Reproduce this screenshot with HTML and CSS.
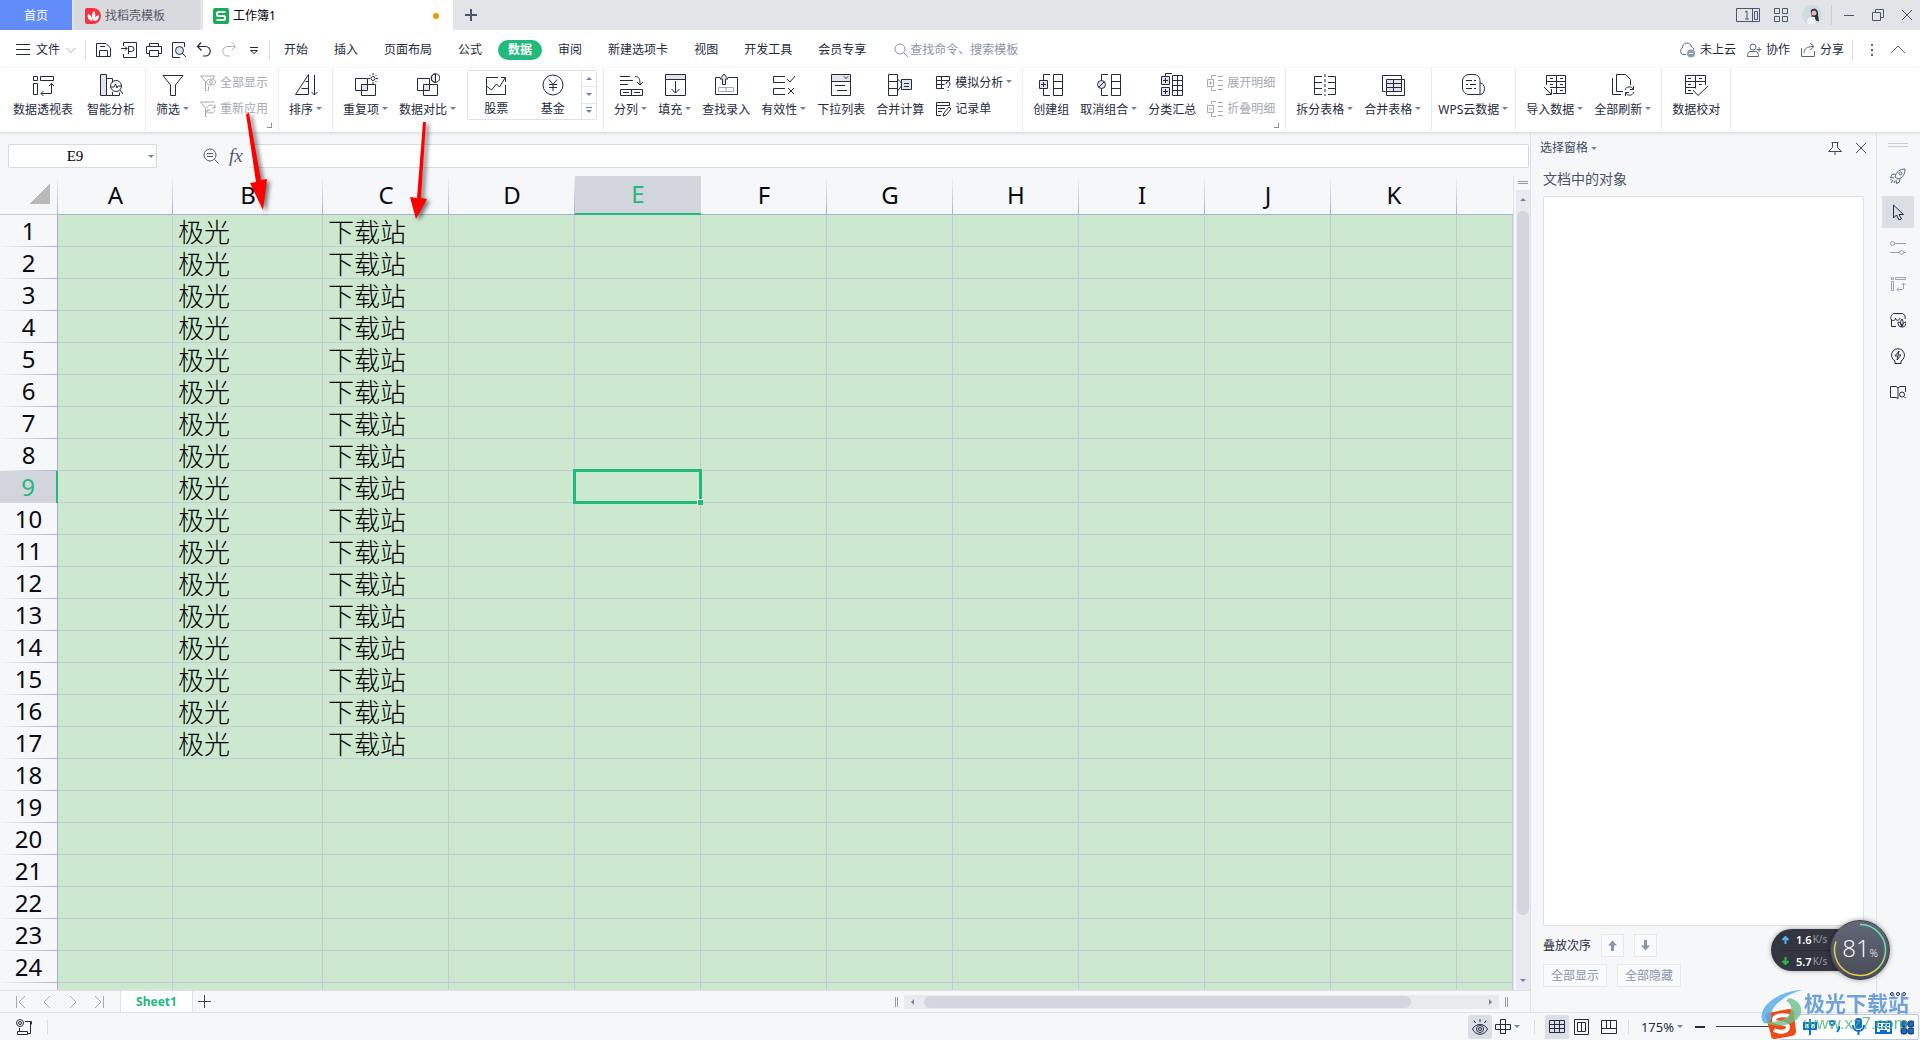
FILE: index.html
```html
<!DOCTYPE html>
<html lang="zh-CN">
<head>
<meta charset="utf-8">
<title>工作簿1</title>
<link rel="stylesheet" href="styles.css">
</head>
<body>
<header class="titlebar">
  <button class="tab tab-home">首页</button>
  <button class="tab tab-docer"><svg class="logo" width="16" height="16" viewBox="0 0 16 16"><path d="M2 0h6a8 8 0 0 1 0 16H2a2 2 0 0 1-2-2V2a2 2 0 0 1 2-2z" fill="#f5333f"/><path d="M7 13C3 12 2 9 3 6c3 1 4 3 4 7zM8 13c-2-4-1-8 1-10 2 3 2 7-1 10zM9 13c1-4 2-5 5-6 0 4-2 6-5 6z" fill="#fff"/></svg>找稻壳模板</button>
  <button class="tab tab-book"><svg class="logo" width="16" height="16" viewBox="0 0 16 16"><rect width="16" height="16" rx="2" fill="#1aad57"/><path d="M12.500 4H5.500a1.500 1.500 0 0 0-1.500 1.500v1A1.500 1.500 0 0 0 5.500 8h5a1.500 1.500 0 0 1 1.500 1.500v1a1.500 1.500 0 0 1-1.500 1.500h-7" fill="none" stroke="#fff" stroke-width="2"/></svg>工作簿1<span class="unsaved"></span></button>
  <button class="tab-add" aria-label="新建"><svg width="12" height="12" viewBox="0 0 12 12"><path d="M6 0v12M0 6h12" stroke-width="2"/></svg></button>
  <div class="window-tools">
    <button aria-label="窗口"><svg width="24" height="14" viewBox="0 0 24 14"><path d="M.5.500h23v13H.5zM16.500.500v13M9 4l2-1v8M9 11h4M18.500 3.500h3v8h-3z"/></svg></button>
    <button aria-label="应用"><svg width="14" height="14" viewBox="0 0 14 14"><path d="M.5.500h5v5h-5zM8.500.500h5v5h-5zM.5 8.500h5v5h-5zM8.500 8.500h5v5h-5z"/></svg></button>
    <button aria-label="账户"><svg class="logo" width="20" height="20" viewBox="0 0 20 20"><circle cx="10" cy="10" r="10" fill="#cfdde2"/><path d="M9 5c4-3 8 0 7 5l1 6c-3 1-4-2-4-4l-4 0c2-2-1-3 0-7z" fill="#30303a"/><circle cx="12" cy="8" r="2.500" fill="#e5b9ad"/><path d="M5 18c0-5 3-7 7-6l2 6c-3 2-6 2-9 0z" fill="#eef4f5"/></svg></button>
    <span class="vsep"></span>
    <button aria-label="最小化"><svg width="12" height="12" viewBox="0 0 12 12"><path d="M1 6.500h10"/></svg></button>
    <button aria-label="还原"><svg width="12" height="12" viewBox="0 0 12 12"><path d="M.5 3.500h8v8h-8zM3.500 3V.5h8v8H9"/></svg></button>
    <button aria-label="关闭"><svg width="12" height="12" viewBox="0 0 12 12"><path d="M1 1l10 10M11 1L1 11"/></svg></button>
  </div>
</header>

<nav class="menubar">
  <button class="file-menu"><svg width="14" height="14" viewBox="0 0 14 14"><path d="M0 1.500h14M0 6.500h14M0 11.500h14"/></svg>文件<svg class="soft" width="10" height="10" viewBox="0 0 10 10"><path d="M.5 3l4.500 4.500L9.500 3"/></svg></button>
  <span class="vsep"></span>
  <div class="quick">
    <button aria-label="保存"><svg width="16" height="16" viewBox="0 0 16 16"><path d="M.5 14.500V1.500h9.500l4.500 4.500v8.500zM3.500 14.500V8.500h8v6M4 4.500h5"/></svg></button>
    <button aria-label="输出"><svg width="16" height="16" viewBox="0 0 16 16"><path d="M2.500 4V.5h13v15h-13V12M0 6.500h6M4 4.500l2 2-2 2M7.500 12V4.500h3a2.500 2.500 0 0 1 0 5h-3"/></svg></button>
    <button aria-label="打印"><svg width="16" height="16" viewBox="0 0 16 16"><path d="M3.500 4.500v-3h9v3M3 11.500H.5v-7h15v7H13M3.500 8.500h9v6h-9z"/></svg></button>
    <button aria-label="打印预览"><svg width="16" height="16" viewBox="0 0 16 16"><path d="M13.500 5V.5h-12v15H9"/><circle cx="8.500" cy="8.500" r="4" fill="#dde1e8"/><path d="M11 11l4 4"/></svg></button>
    <button aria-label="撤销"><svg width="16" height="16" viewBox="0 0 16 16"><path d="M5 .5L1.500 4.500l4 4M2 4.500h7.500a4.500 4.500 0 0 1 0 9.500H7" stroke-width="1.200"/></svg></button>
    <button aria-label="恢复" disabled><svg width="16" height="16" viewBox="0 0 16 16"><path d="M11 .5l3.500 4-4 4M14 4.500H6.500a4.500 4.500 0 0 0 0 9.500H9"/></svg></button>
    <button aria-label="更多"><svg width="16" height="16" viewBox="0 0 16 16"><path d="M4 5.500h8M4.500 8.500l3.500 3 3.500-3z"/></svg></button>
  </div>
  <span class="vsep"></span>
  <div class="menus">
    <button>开始</button><button>插入</button><button>页面布局</button><button>公式</button><button class="active">数据</button><button>审阅</button><button>新建选项卡</button><button>视图</button><button>开发工具</button><button>会员专享</button>
  </div>
  <label class="search"><svg width="14" height="14" viewBox="0 0 14 14"><circle cx="6" cy="6" r="5"/><path d="M10 10l4 4"/></svg><input type="text" placeholder="查找命令、搜索模板" aria-label="查找命令"></label>
  <div class="share">
    <button><svg width="17" height="16" viewBox="0 0 17 16"><path d="M7 12.500H4a3.500 3.500 0 0 1-.5-6.500 4.500 4.500 0 0 1 9-1c1.500.5 2.500 1.500 2.500 3"/><circle cx="12" cy="11.500" r="4" fill="#8f9bb3" stroke="none"/><path d="M10 11.500h4" stroke="#fff"/></svg>未上云</button>
    <button><svg width="15" height="16" viewBox="0 0 15 16"><circle cx="6" cy="5" r="3"/><path d="M3 9.500C1 10 .5 12 .5 14.500h11c0-3-1-5-3-5zM12 5v5M9.500 7.500h5"/></svg>协作</button>
    <button><svg width="15" height="16" viewBox="0 0 15 16"><path d="M.5 6v8.500h13V9M3 11c0-4 3-6.500 9-6.500M9 1l4 3.500L9 8"/></svg>分享</button>
    <span class="vsep"></span>
    <button aria-label="更多"><svg width="16" height="16" viewBox="0 0 16 16"><path d="M8 2v2M8 7v2M8 12v2" stroke-width="2"/></svg></button>
    <button aria-label="收起"><svg width="16" height="16" viewBox="0 0 16 16"><path d="M1 11l7-7 7 7"/></svg></button>
  </div>
</nav>

<section class="ribbon">
  <div class="group first">
    <button class="big"><svg viewBox="0 0 24 24"><path d="M2.500 3.500h4v4h-4zM9.500 3.500h13v4h-13zM2.500 10.500h4v11h-4zM20.500 20V10.500M18 13l2.500-2.500L23 13M20.500 18v2.500H10M12.500 18L10 20.500l2.500 2.500"/></svg><span>数据透视表</span></button>
    <button class="big"><svg viewBox="0 0 24 24"><path d="M1.500 1.500h6v21h-6z" class="tint"/><path d="M7.500 5.500h6v4M7.500 22.500h13v-3M13.500 19v3"/><circle cx="17" cy="13" r="5.500"/><path d="M21 17l3 4M12 14h3l1.500-3 1.500 4 1-2h3"/></svg><span>智能分析</span></button>
  </div>
  <div class="group">
    <button class="big"><svg viewBox="0 0 24 24"><path d="M2 2.500h20L14.500 12v10.500h-5V12z"/></svg><span class="drop">筛选</span></button>
    <div class="stack">
      <button class="small" disabled><svg viewBox="0 0 16 16"><path d="M7 15.500H5.500V7L.5 1h14L13 4M8.500 11v4.500"/><circle cx="11" cy="7" r="1.500"/><path d="M6 7c2-4 8-4 10 0-2 4-8 4-10 0z"/></svg>全部显示</button>
      <button class="small" disabled><svg viewBox="0 0 16 16"><path d="M7 15.500H5.500V7L.5 1h14M7 7c1-4 7-4 8 0M15 3.500V7h-3M15 9c-1 4-7 4-8 0M7 12.500V9h3"/></svg>重新应用</button>
      <i class="corner"></i>
    </div>
  </div>
  <div class="group">
    <button class="big"><svg viewBox="0 0 24 24"><path d="M14.500 1.500v20H1.500zM11.500 8.500h3M7.500 15.500h7M20.500 2v20M17.500 19l3 3 3-3"/></svg><span class="drop">排序</span></button>
  </div>
  <div class="group">
    <button class="big"><svg viewBox="0 0 24 24"><path d="M8.500 17.500h-7v-12h12v6"/><path d="M7.500 11.500h6v6h-6z" class="tint"/><path d="M13.500 11.500h8v11h-14v-5"/><circle cx="19" cy="5.500" r="2"/><path d="M19 0v2M19 9v2M14 5.500h2M22 5.500h2M15.500 2l1 1M22.500 2l-1 1M22.500 9l-1-1"/></svg><span class="drop">重复项</span></button>
    <button class="big"><svg viewBox="0 0 24 24"><path d="M8.500 17.500h-7v-12h12v6"/><path d="M7.500 11.500h6v6h-6z" class="tint"/><path d="M13.500 11.500h8v11h-14v-5"/><path d="M19.500 1a4 4 0 0 0 0 8.500z" class="tint"/><circle cx="19.500" cy="5" r="4.300"/></svg><span class="drop">数据对比</span></button>
    <div class="gallery">
      <button class="big"><svg viewBox="0 0 24 24"><path d="M14 4.500H2.500v17h19V12M2.500 13l5 4 5-6 3 3L21 5M17 4.500h4.500V9"/></svg><span>股票</span></button>
      <button class="big"><svg viewBox="0 0 24 24"><circle cx="12" cy="12" r="10"/><path d="M8 6.500l4 5 4-5M12 11v7M8 11.500h8M8 14.500h8"/></svg><span>基金</span></button>
      <div class="spin"><button aria-label="上"><i class="up"></i></button><button aria-label="下"><i class="dn"></i></button><button aria-label="展开"><i class="dn bar"></i></button></div>
    </div>
  </div>
  <div class="group">
    <button class="big"><svg viewBox="0 0 24 24"><path d="M1 3.500h10M1 7.500h13M1 11.500h8M16 3.500c4 0 5 2 5 8M18 9l3 3 3-3M1.500 16.500h22v6h-22zM12.500 16.500v6M4 19.500h6M15 19.500h6"/></svg><span class="drop">分列</span></button>
    <button class="big"><svg viewBox="0 0 24 24"><path d="M2.500 1.500h20v5h-20z" class="tint"/><path d="M2.500 6.500h20v16h-20zM12.500 8v12M8.500 16l4 4 4-4"/></svg><span class="drop">填充</span></button>
    <button class="big"><svg viewBox="0 0 24 24"><path d="M6 4.500H1.500v17h22v-17H14"/><path d="M8.500 11.500V6H6l4-5 4 5h-2.500v5.500z" class="tint"/><path d="M4.500 14.500h15v4h-15zM12 14.500v4" class="soft"/></svg><span>查找录入</span></button>
    <button class="big"><svg viewBox="0 0 24 24"><path d="M13 3.500H1.500v6H13M13 15.500H1.500v6H13M15 6l3 3 5-6M16 15l6 6M22 15l-6 6"/></svg><span class="drop">有效性</span></button>
    <button class="big"><svg viewBox="0 0 24 24"><path d="M2.500 1.500h19v7h-19z" class="tint"/><path d="M2.500 8.500h19v14h-19zM15 3.500l2 2 2-2M6 12.500h10M8 17.500h10"/></svg><span>下拉列表</span></button>
    <button class="big"><svg viewBox="0 0 24 24"><path d="M.5 1.500h9v21h-9zM.5 8.500h9M.5 15.500h9M9.500 6l4 4M9.500 18l4-5"/><path d="M13.500 6.500h10v10h-10z" class="tint"/><path d="M16 10.500h5M16 13.500h5"/></svg><span>合并计算</span></button>
    <div class="stack">
      <button class="small"><svg viewBox="0 0 16 16"><path d="M9 13.500H1.500v-12h13V6M1.500 5.500h13M1.500 9.500h8M6.500 1.500v12M11 9c0-3 4-3 4 0 0 2-2 2-2 4M13 15v1"/></svg><span class="drop">模拟分析</span></button>
      <button class="small"><svg viewBox="0 0 16 16"><path d="M6 14.500H1.500v-13h13V5M1.500 4.500h13M3 7.500h7M3 10.500h4M8 15l1-3 5-6 2 2-5 6z"/></svg>记录单</button>
    </div>
  </div>
  <div class="group">
    <button class="big"><svg viewBox="0 0 24 24"><path d="M11 1.500H4.500v21H11M14.500 1.500h9v21h-9zM14.500 8.500h9M14.500 15.500h9"/><path d="M.5 7.500h8v8h-8z" class="tint"/><path d="M2 11.500h5M4.500 9v5"/></svg><span>创建组</span></button>
    <button class="big"><svg viewBox="0 0 24 24"><path d="M11 1.500H4.500v21H11M14.500 1.500h9v21h-9zM14.500 8.500h9M14.500 15.500h9"/><circle cx="4.500" cy="11.500" r="4" class="tint"/><path d="M2 14l5-5"/></svg><span class="drop">取消组合</span></button>
    <button class="big"><svg viewBox="0 0 24 24"><path d="M5.500 3V.5H12M12.500 2.500h10v20h-10zM12.500 7.500h10M12.500 12.500h10M12.500 17.500h10M17.500 2.500v20"/><path d="M1.500 3.500h8v8h-8zM1.500 14.500h8v8h-8z" class="tint"/><path d="M3 7.500h5M5.500 5v5M3 18.500h5M5.500 16v5"/></svg><span>分类汇总</span></button>
    <div class="stack">
      <button class="small" disabled><svg viewBox="0 0 16 16"><path d="M9 .5H4.500v3M4.500 12v3.500H9M.5 4.500h6v7h-6zM2 8h3M3.500 6.500v3M11 1.500h5M11 5.500h5M11 10.500h5M11 14.500h5"/></svg>展开明细</button>
      <button class="small" disabled><svg viewBox="0 0 16 16"><path d="M9 .5H4.500v3M4.500 12v3.500H9M.5 4.500h6v7h-6zM2 8h3M11 1.500h5M11 5.500h5M11 10.500h5M11 14.500h5"/></svg>折叠明细</button>
      <i class="corner"></i>
    </div>
  </div>
  <div class="group">
    <button class="big"><svg viewBox="0 0 24 24"><path d="M9 3.500H1.500v18H9M1.500 9.500H9M1.500 15.500H9M15 3.500h7.500v18H15M22.500 9.500H15M22.500 15.500H15"/><path d="M12 1v22" stroke-dasharray="3 2"/></svg><span class="drop">拆分表格</span></button>
    <button class="big"><svg viewBox="0 0 24 24"><path d="M4.500 18.500h-3v-16h19v4"/><path d="M5.500 6.500h15v12h-15z" class="tint"/><path d="M20.500 6.500h3v16h-18v-4M5.500 10.500h15M5.500 14.500h15M12.500 6.500v12"/></svg><span class="drop">合并表格</span></button>
  </div>
  <div class="group snug">
    <button class="big"><svg viewBox="0 0 24 24"><path d="M8 1.500h5a6 6 0 0 1 6 6v14H8a6.500 6.500 0 0 1-6.500-6.500V8A6.500 6.500 0 0 1 8 1.500zM19 10c6 0 6 11.500 0 11.500M5 7.500h6M13 7.500h2M5 11.500h2M9 11.500h6M5 15.500h6M13 15.500h2"/></svg><span class="drop">WPS云数据</span></button>
  </div>
  <div class="group">
    <button class="big"><svg viewBox="0 0 24 24"><path d="M3.500 12V2.500h19v18H10M3.500 8.500h19M7 14.500h15.500M13.500 2.500v18M7 5.500h3M7 11.500h3M17 5.500h3M17 11.500h3M17 17.500h3M1 14l7 7M8.500 16v5.500H3"/></svg><span class="drop">导入数据</span></button>
    <button class="big"><svg viewBox="0 0 24 24"><path d="M1.500 5v16.500H10M12 18.500H5.500v-17h9l5 5V12M14 17c1-4 7-4 8-1M22.500 13v3.500H19M23 19c-1 4-7 4-8 1M14.500 23v-3.500H18"/></svg><span class="drop">全部刷新</span></button>
  </div>
  <div class="group">
    <button class="big"><svg viewBox="0 0 24 24"><path d="M9 20.500H1.500v-18h20V12M1.500 8.500h20M1.500 14.500H12M11.500 2.500v13M4 5.500h3M4 11.500h3M4 17.500h3M15 5.500h3M15 11.500h3M9 17l5 5.500L24 13"/></svg><span>数据校对</span></button>
  </div>
</section>

<main class="main">
  <section class="workspace">
    <div class="formula">
      <div class="namebox"><input type="text" value="E9" aria-label="名称框"><i class="dn"></i></div>
      <button aria-label="浏览公式"><svg width="16" height="16" viewBox="0 0 16 16"><circle cx="7" cy="7" r="6"/><path d="M11.500 11.500l4 4M4 5.500h6M4 8.500h6"/></svg></button>
      <button class="fx">fx</button>
      <input class="formula-input" type="text" aria-label="编辑栏">
    </div>
    <div class="sheet">
      <div class="grid">
        <table>
          <colgroup><col class="c-head"><col class="c-a"><col class="c-b"><col class="c"><col class="c"><col class="c"><col class="c"><col class="c"><col class="c"><col class="c"><col class="c"><col class="c"><col></colgroup>
          <thead><tr><th class="all"><i></i></th><th>A</th><th>B</th><th>C</th><th>D</th><th class="on">E</th><th>F</th><th>G</th><th>H</th><th>I</th><th>J</th><th>K</th><th></th></tr></thead>
          <tbody>
          <tr><th>1<td><td>极光<td>下载站<td><td><td><td><td><td><td><td><td>
          <tr><th>2<td><td>极光<td>下载站<td><td><td><td><td><td><td><td><td>
          <tr><th>3<td><td>极光<td>下载站<td><td><td><td><td><td><td><td><td>
          <tr><th>4<td><td>极光<td>下载站<td><td><td><td><td><td><td><td><td>
          <tr><th>5<td><td>极光<td>下载站<td><td><td><td><td><td><td><td><td>
          <tr><th>6<td><td>极光<td>下载站<td><td><td><td><td><td><td><td><td>
          <tr><th>7<td><td>极光<td>下载站<td><td><td><td><td><td><td><td><td>
          <tr><th>8<td><td>极光<td>下载站<td><td><td><td><td><td><td><td><td>
          <tr><th class="on">9<td><td>极光<td>下载站<td><td class="selected"><i></i><td><td><td><td><td><td><td>
          <tr><th>10<td><td>极光<td>下载站<td><td><td><td><td><td><td><td><td>
          <tr><th>11<td><td>极光<td>下载站<td><td><td><td><td><td><td><td><td>
          <tr><th>12<td><td>极光<td>下载站<td><td><td><td><td><td><td><td><td>
          <tr><th>13<td><td>极光<td>下载站<td><td><td><td><td><td><td><td><td>
          <tr><th>14<td><td>极光<td>下载站<td><td><td><td><td><td><td><td><td>
          <tr><th>15<td><td>极光<td>下载站<td><td><td><td><td><td><td><td><td>
          <tr><th>16<td><td>极光<td>下载站<td><td><td><td><td><td><td><td><td>
          <tr><th>17<td><td>极光<td>下载站<td><td><td><td><td><td><td><td><td>
          <tr><th>18<td><td><td><td><td><td><td><td><td><td><td><td>
          <tr><th>19<td><td><td><td><td><td><td><td><td><td><td><td>
          <tr><th>20<td><td><td><td><td><td><td><td><td><td><td><td>
          <tr><th>21<td><td><td><td><td><td><td><td><td><td><td><td>
          <tr><th>22<td><td><td><td><td><td><td><td><td><td><td><td>
          <tr><th>23<td><td><td><td><td><td><td><td><td><td><td><td>
          <tr><th>24<td><td><td><td><td><td><td><td><td><td><td><td>
          <tr><th><td><td><td><td><td><td><td><td><td><td><td><td>
          </tbody>
        </table>
      </div>
      <div class="vscroll"><span class="split"></span><div class="vtrack"><i class="up"></i><span class="vthumb"></span><i class="dn"></i></div></div>
    </div>
    <div class="sheetbar">
      <div class="sheetnav">
        <button aria-label="第一张"><svg width="10" height="12" viewBox="0 0 10 12"><path d="M.5 0v12M9 0L3 6l6 6"/></svg></button>
        <button aria-label="上一张"><svg width="10" height="12" viewBox="0 0 10 12"><path d="M8 0L2 6l6 6"/></svg></button>
        <button aria-label="下一张"><svg width="10" height="12" viewBox="0 0 10 12"><path d="M2 0l6 6-6 6"/></svg></button>
        <button aria-label="最后一张"><svg width="10" height="12" viewBox="0 0 10 12"><path d="M9.500 0v12M1 0l6 6-6 6"/></svg></button>
      </div>
      <button class="sheet-tab">Sheet1</button>
      <button class="sheet-add" aria-label="新建工作表"><svg width="13" height="13" viewBox="0 0 13 13"><path d="M6.500 0v13M0 6.500h13"/></svg></button>
      <div class="hscroll"><span class="grip"></span><div class="htrack"><i class="lf"></i><span class="hthumb"></span><i class="rt"></i></div><span class="grip"></span></div>
    </div>
  </section>

  <aside class="pane">
    <div class="pane-head"><button class="drop">选择窗格</button>
      <button class="pin" aria-label="固定"><svg width="14" height="14" viewBox="0 0 14 14"><path d="M3.500 1.500h7M4.500 1.500v5L.5 10.500h13l-4-4v-5M7 10.500V14"/></svg></button>
      <button aria-label="关闭"><svg width="12" height="12" viewBox="0 0 12 12"><path d="M1 1l10 10M11 1L1 11"/></svg></button></div>
    <h2>文档中的对象</h2>
    <div class="objects"></div>
    <div class="order"><span>叠放次序</span>
      <button aria-label="上移"><svg width="9" height="11" viewBox="0 0 9 11"><path d="M4.500 11V4" stroke-width="3"/><path d="M0 5.500L4.500.500 9 5.500z" fill="#8a94ab" stroke="none"/></svg></button>
      <button aria-label="下移"><svg width="9" height="11" viewBox="0 0 9 11"><path d="M4.500 0v7" stroke-width="3"/><path d="M0 5.500l4.500 5L9 5.500z" fill="#8a94ab" stroke="none"/></svg></button></div>
    <div class="showhide"><button>全部显示</button><button>全部隐藏</button></div>
  </aside>

  <nav class="rail">
    <span class="rail-grip"></span>
    <button aria-label="火箭"><svg class="mid" viewBox="0 0 16 16"><path d="M5 9c1-5 5-8 10-8 0 5-2 9-7 10zM5.500 6L2 6.500.500 9.500 4 10M10 10.500l-.5 3.500-3 1.500L6 12M3 12l-2 3M5 13l-1 2M1.500 11l-1 1"/><circle cx="10.500" cy="5.500" r="1.500"/></svg></button>
    <button class="on" aria-label="选择"><svg viewBox="0 0 16 16"><path d="M3.500 1v13l3-3 2.500 5 2.500-1L9 10.500h4.500z"/></svg></button>
    <button aria-label="设置"><svg class="dim" viewBox="0 0 16 16"><circle cx="2.500" cy="3.500" r="2"/><circle cx="11.500" cy="12.500" r="2"/><path d="M4.500 3.500H16M0 12.500h9.500M13.500 12.500H16"/></svg></button>
    <button aria-label="透视表"><svg class="dim" viewBox="0 0 16 16"><path d="M1.500 1.500h2v2h-2zM5.500 1.500h10v2h-10zM1.500 5.500h2v9h-2zM13.500 13V7M11.500 9l2-2 2 2M13 13.500H7M9 11.500l-2 2 2 2"/></svg></button>
    <button aria-label="模板"><svg viewBox="0 0 16 16"><path d="M1.500 8v6.500H6M1 7.500C0 5 2 1.500 4 1.500h8c2 0 4 3 3 5.500M1 7c1 2 4 2 4.500 0M5.500 6c0 3 4 3 4.500 0"/><path d="M12 7c2 3 1 5 0 8-2-3-2-5 0-8zM8 10c2 0 4 2 4 5-3 0-4-2-4-5zM16 10c-2 0-4 2-4 5 3 0 4-2 4-5z"/></svg></button>
    <button aria-label="助手"><svg viewBox="0 0 16 16"><path d="M5 13a6.500 6.500 0 1 1 6 0v2.500H5zM9 3L5 8h3l-1 4 4-5H8z"/></svg></button>
    <button aria-label="帮助"><svg viewBox="0 0 16 16"><path d="M15.500 8V2.500H10L8 4 6 2.500H.5v11H6l2 1M8 4v10.500"/><circle cx="12" cy="10.500" r="2.500"/><path d="M14 12.500l2 2"/></svg></button>
    <button class="more" aria-label="更多"><svg viewBox="0 0 16 16"><circle cx="2" cy="8" r="1.500"/><circle cx="8" cy="8" r="1.500"/><circle cx="14" cy="8" r="1.500"/></svg></button>
  </nav>
</main>

<footer class="status">
  <button class="macro" aria-label="录制宏"><svg width="16" height="16" viewBox="0 0 16 16"><circle cx="4" cy="4" r="3.500"/><circle cx="4" cy="4" r="1.500"/><path d="M9 2.500h5.500v11M14.500 2.500h1v3M1.500 12.500h10v3h-10zM3.500 9v3.500M12 14.500h2.500v-2"/></svg></button>
  <span class="vsep"></span>
  <div class="views">
    <button class="on" aria-label="护眼模式"><svg width="16" height="16" viewBox="0 0 16 16"><path d="M.5 10c3-6 12-6 15 0-3 7-12 7-15 0zM8 0v3M2 1.500L3.500 4M14 1.500L12.500 4"/><circle cx="8" cy="10" r="3.500"/><circle cx="8" cy="10" r="1.500"/></svg></button>
    <button class="drop cross" aria-label="阅读模式"><svg width="16" height="16" viewBox="0 0 16 16"><path d="M5.500.500h5v14h-5zM.5 5.500h15v5H.5z"/></svg></button>
    <span class="vsep"></span>
    <button class="on" aria-label="普通视图"><svg width="16" height="14" viewBox="0 0 16 14"><path d="M.5.500h15v12H.5zM.5 4.500h15M.5 8.500h15M5.500.500v12M10.500.500v12"/></svg></button>
    <button aria-label="分页预览"><svg width="16" height="16" viewBox="0 0 16 16"><path d="M.5.500h14v15H.5zM3.500 3.500h8v9h-8zM7.500 3.500v9"/></svg></button>
    <button aria-label="页面布局"><svg width="16" height="14" viewBox="0 0 16 14"><path d="M.5.500h15v13H.5zM.5 8.500h9v-8M5.500.500v8M9.500 8.500h6"/></svg></button>
    <span class="vsep"></span>
    <button class="drop zoom">175%</button>
    <button class="minus" aria-label="缩小"><svg width="10" height="10" viewBox="0 0 10 10"><path d="M0 5h10" stroke-width="2"/></svg></button>
    <input type="range" class="slider" min="10" max="400" value="400" aria-label="缩放">
  </div>
</footer>

<svg class="pointers" width="480" height="240" viewBox="0 0 480 240">
  <g fill="#f00"><path d="M246 114l3-1 12 67 6-1-4 31-13-27 6-1z"/><path d="M423 122h3l-5 76 6 1-11 20-6-22 7 1z"/></g>
</svg>

<div class="netmeter">
  <div class="speeds"><div><svg width="7" height="8" viewBox="0 0 7 8"><path d="M3.500 8V1M.5 4l3-3 3 3" stroke="#4db8f5" stroke-width="2"/></svg><b>1.6</b>K/s</div><div><svg width="7" height="8" viewBox="0 0 7 8"><path d="M3.500 0v7M.5 4l3 3 3-3" stroke="#2eb84a" stroke-width="2"/></svg><b>5.7</b>K/s</div></div>
  <div class="gauge"><svg width="60" height="60" viewBox="0 0 60 60"><defs><linearGradient id="arc" x1="0" y1="1" x2="1" y2="0"><stop offset="0" stop-color="#f5b542"/><stop offset=".4" stop-color="#d8dc50"/><stop offset="1" stop-color="#3fe0e0"/></linearGradient></defs><path d="M30 4.500a25.500 25.500 0 1 1-24 17" stroke="url(#arc)" stroke-width="1.500"/></svg><span>81<small>%</small></span></div>
</div>

<div class="ime">
  <div class="ime-bar"><svg width="112" height="20" viewBox="0 0 112 20"><g stroke="#0a6ed8" stroke-width="2"><path d="M2 6h12v6H2zM8 2v16"/><circle cx="30" cy="6" r="2"/><path d="M37 9v3l-2 3"/><rect x="54" y="2" width="5" height="9" rx="2" fill="#0a6ed8"/><path d="M51 8c0 8 11 8 11 0M56.500 14v4M74 5h15v11H74zM77 8h2M81 8h2M85 8h2M77 11h2M81 11h2M85 11h2M78 14h7"/></g><g fill="#0a6ed8"><rect x="99" y="4" width="6" height="6" rx="2"/><rect x="106" y="4" width="6" height="6" rx="2"/><rect x="99" y="11" width="6" height="6" rx="2"/><rect x="106" y="11" width="6" height="6" rx="2"/></g></svg></div>
  <svg class="badge" width="42" height="50" viewBox="0 0 42 50"><path d="M7 23l21-4c3 0 4 1 5 4l2 18c0 3-1 4-4 5l-17 3c-3 0-4-1-4-4L5 27c0-2 0-3 2-4z" fill="#f04a14"/><path d="M28 26c-8-2-15 0-15 4s14 2 14 7-8 6-14 3" stroke="#fff" stroke-width="4"/><path d="M41 0C22 0-3 14 1 30c2 6 8 3 10-2C7 20 20 6 41 0z" fill="#59aee6" opacity=".85"/><path d="M28 8c14 3 16 16 6 23C25 37 12 37 3 32c13 1 26-3 27-12 1-4-1-7-5-9z" fill="#6cc08a" opacity=".8"/></svg>
  <div class="mark"><strong>极光下载站</strong><span>www.xz7.com</span></div>
</div>
</body>
</html>
```
FILE: styles.css
```css
* { box-sizing: border-box; }
body {
  margin: 0;
  height: 100vh;
  display: flex;
  flex-direction: column;
  overflow: hidden;
  position: relative;
  background: #f6f7f9;
  color: #252b3e;
  font: 12px/18px "Noto Sans", "Noto Sans CJK SC", sans-serif;
}
button, input { font: inherit; color: inherit; background: none; border: 0; padding: 0; margin: 0; }
button { display: flex; align-items: center; white-space: nowrap; }
svg { fill: none; stroke: currentColor; flex: none; display: block; }
.logo, .pointers { stroke: none; }
.tint { fill: #e1e4ea; }
.soft { stroke: #a2a8b5; }
.vsep { width: 1px; height: 20px; background: #d9dce3; flex: none; }

/* small triangles */
.dn, .up, .lf, .rt { width: 0; height: 0; display: block; border: 3px solid transparent; flex: none; }
.dn { border-top-color: #7684a3; border-bottom: 0; }
.up { border-bottom-color: #7684a3; border-top: 0; }
.lf { border-right-color: #7684a3; border-left: 0; }
.rt { border-left-color: #7684a3; border-right: 0; }
.drop::after { content: ""; display: inline-block; margin-left: 3px; border: 3px solid transparent; border-top-color: #7684a3; border-bottom: 0; vertical-align: 4px; }

.titlebar { height: 30px; display: flex; background: #e2e4e8; flex: none; }
.tab { height: 30px; gap: 4px; padding-top: 2px; }
.tab-home { width: 72px; background: #638cfb; color: #fff; justify-content: center; }
.tab-docer { width: 126px; margin-left: 2px; padding-left: 11px; background: #d9dadd; color: #555b68; }
.tab-book { width: 250px; margin-left: 3px; padding: 2px 14px 0 10px; background: #fff; color: #000; }
.unsaved { width: 6px; height: 6px; border-radius: 50%; background: #e69b00; margin-left: auto; }
.tab-add { margin-left: 12px; color: #4a5570; }
.window-tools { margin-left: auto; display: flex; align-items: center; gap: 13px; padding-right: 7px; color: #4a5673; }
.window-tools .vsep { background: #c9ccd4; margin-left: -4px; margin-right: -2px; }
.window-tools button + button { margin-left: 1px; }
.window-tools .vsep ~ button + button { margin-left: 4px; }

.menubar { height: 38px; display: flex; align-items: center; background: #fff; flex: none; padding: 1px 0 0 16px; }
.file-menu { gap: 6px; margin-right: 9px; }
.quick { display: flex; gap: 9px; margin: 0 7px 0 10px; }
.quick button:disabled { color: #a9aeba; }
.menus { display: flex; gap: 6px; margin-left: 4px; }
.menus button { height: 20px; padding: 0 10px; border-radius: 10px; }
.menus .active { background: #21ba7c; color: #fff; font-weight: 700; }
.search { display: flex; align-items: center; gap: 2px; margin-left: 18px; color: #8a94ab; }
.search input { width: 150px; }
.search input::placeholder { color: #8a94ab; opacity: 1; }
.share { margin-left: auto; display: flex; align-items: center; gap: 11px; padding-right: 14px; }
.share button { gap: 4px; }
.share svg { color: #5a647c; }
.share .vsep { margin-left: -3px; }
.share .vsep + button { margin-right: -1px; }

.ribbon { display: flex; background: #fff; flex: none; box-shadow: 0 1px 3px #d5d7dc; position: relative; padding-bottom: 2px; }
.group { display: flex; align-items: flex-start; gap: 11px; padding: 5px 10px 0; border-right: 1px solid #e9ebef; height: 62px; flex: none; }
.group.first { padding-left: 13px; gap: 14px; }
.group.snug { padding-left: 6px; padding-right: 7px; }
.big { flex-direction: column; gap: 4px; }
.big svg { width: 24px; height: 24px; }
.stack { display: flex; flex-direction: column; gap: 8px; position: relative; padding-top: 1px; }
.small { gap: 4px; height: 18px; }
.small svg { width: 16px; height: 16px; }
.small:disabled { color: #a6a9b0; }
.corner { position: absolute; right: -4px; top: 50px; width: 5px; height: 5px; border: solid #8690a8; border-width: 0 1px 1px 0; }
.gallery { display: flex; width: 130px; height: 50px; margin-top: -3px; margin-right: -4px; border: 1px solid #dfe1e6; border-radius: 2px; }
.gallery .big { flex: 1; padding-top: 2px; gap: 3px; }
.spin { width: 15px; display: flex; flex-direction: column; border-left: 1px solid #e4e6ea; }
.spin button { flex: 1; justify-content: center; border-top: 1px solid #e4e6ea; }
.spin button:first-child { border-top: 0; }
.spin .bar { position: relative; }
.spin .bar::before { content: ""; position: absolute; left: -3px; top: -6px; width: 6px; height: 1px; background: #7684a3; }

.main { flex: 1; min-height: 0; display: flex; }
.workspace { flex: 1; min-width: 0; display: flex; flex-direction: column; }
.formula { display: flex; align-items: center; height: 44px; padding: 4px 1px 0 8px; flex: none; color: #4f5a72; }
.namebox { display: flex; align-items: center; width: 149px; height: 24px; padding-right: 2px; margin-right: 46px; background: #fff; border: 1px solid #d6d9e0; border-radius: 2px; }
.namebox input { flex: 1; min-width: 0; text-align: center; padding-right: 7px; font: 15px/20px "Liberation Serif", serif; color: #000; }
.fx { margin: 0 6px 0 10px; font: italic 19px/20px "Liberation Serif", serif; }
.formula-input { flex: 1; min-width: 0; height: 24px; background: #fff; border: 1px solid #d6d9e0; border-left: 0; border-radius: 2px; }
.sheet { flex: 1; min-height: 0; display: flex; }
.grid { flex: 1; min-width: 0; overflow: hidden; border-right: 1px solid #e0e2e8; margin-right: 2px; }
table { width: 100%; table-layout: fixed; border-collapse: separate; border-spacing: 0; }
.c-head { width: 58px; }
.c-a { width: 115px; }
.c-b { width: 150px; }
.c { width: 126px; }
th { font: 24px/29px "Noto Sans", sans-serif; color: #0a0a12; padding: 0 0 2px; }
td { height: 32px; padding: 0 0 0 5px; border: solid #c3c8da; border-width: 0 1px 1px 0; background: #cce8cf; font: 300 26px/30px "Noto Sans CJK SC", sans-serif; color: #000; white-space: nowrap; }
thead th { height: 39px; border-bottom: 1px solid #a9b0cb; background: linear-gradient(#f6f7f9, #a9b0cb) right / 1px 100% no-repeat; }
thead th:last-child { background: none; }
thead .all { border-bottom-color: #c6cbdc; }
.all i { display: block; margin: 0 8px 0 auto; width: 20px; height: 20px; background: linear-gradient(135deg, transparent 50%, #b9b9b9 50%); }
thead .on { background: #d2d5dc; color: #21ba7c; border-bottom: 2px solid #21ba7c; }
tbody th { background: linear-gradient(90deg, #f6f7f9, #a9b0cb) bottom / 100% 1px no-repeat; border-right: 1px solid #a9b0cb; }
tbody .on { background: #d2d5dc; color: #21ba7c; border-right: 2px solid #21ba7c; }
.selected { position: relative; }
.selected::before { content: ""; position: absolute; inset: -2px; border: 3px solid #21ba7c; }
.selected i { position: absolute; right: -3px; bottom: -3px; width: 6px; height: 6px; background: #21ba7c; border: solid #fff; border-width: 1px 0 0 1px; z-index: 1; }
.vscroll { width: 14px; display: flex; flex-direction: column; }
.split { margin: 5px 2px 6px; height: 3px; border: solid #8f9bb3; border-width: 1px 0; }
.vtrack { flex: 1; display: flex; flex-direction: column; align-items: center; background: #e9eaf0; padding: 8px 0; gap: 10px; }
.vthumb { flex: 1; width: 12px; border-radius: 6px; background: #d3d6de; margin-bottom: 54px; }
.sheetbar { height: 22px; display: flex; align-items: center; border-top: 1px solid #dfe1e8; flex: none; }
.sheetnav { display: flex; gap: 16px; padding: 0 16px 0 16px; color: #a3a8b4; }
.sheet-tab { height: 21px; width: 73px; justify-content: center; background: #fff; color: #21ba7c; font-weight: 700; border: solid #dfe1e8; border-width: 0 1px; }
.sheet-add { margin-left: 5px; color: #3a4560; }
.hscroll { margin-left: auto; width: 41.5%; display: flex; align-items: center; gap: 6px; padding-right: 22px; }
.grip { width: 3px; height: 10px; border: solid #8f9bb3; border-width: 0 1px; }
.htrack { flex: 1; height: 14px; display: flex; align-items: center; gap: 10px; padding: 0 7px; background: #e9eaf0; }
.hthumb { flex: 1; height: 12px; border-radius: 6px; background: #d3d6de; margin-right: 68px; }

.pane { width: 346px; border-left: 1px solid #dfe1e8; padding: 7px 12px 25px 12px; display: flex; flex-direction: column; flex: none; color: #4a5366; }
.pane-head { display: flex; align-items: center; height: 18px; margin: 0 -3px; gap: 13px; color: #3f4a63; }
.pane-head .pin { margin-left: auto; }
h2 { margin: 11px 0 8px; font: 14px/20px "Noto Sans CJK SC", sans-serif; }
.objects { flex: 1; background: #fff; border: 1px solid #dfe1e8; border-radius: 2px; }
.order { display: flex; align-items: center; gap: 10px; margin: 8px 0 7px; color: #252b3e; }
.order button, .showhide button { height: 23px; border: 1px solid #e6e8ec; color: #8a94ab; background: #f9fafb; justify-content: center; }
.order button { width: 23px; }
.showhide { display: flex; gap: 10px; }
.showhide button { width: 64px; }

.rail { width: 44px; border-left: 1px solid #dfe1e8; padding: 11px 0 9px 5px; display: flex; flex-direction: column; gap: 4px; flex: none; }
.rail-grip { width: 20px; height: 4px; margin: 0 0 9px 6px; border: solid #c9ccd4; border-width: 1px 0; }
.rail button { width: 32px; height: 32px; border-radius: 2px; justify-content: center; }
.rail svg { width: 16px; height: 16px; }
.rail .on, .views .on { background: #dadfe6; }
.rail .mid { color: #53617f; }
.rail .dim { color: #9aa3b5; }
.rail .more { height: 18px; margin-top: auto; }

.status { height: 28px; display: flex; align-items: center; border-top: 1px solid #dfe1e8; flex: none; }
.macro { margin: 0 15px 0 16px; }
.status .vsep { height: 14px; }
.views { margin-left: auto; display: flex; align-items: center; padding-right: 51px; }
.views .on { width: 24px; height: 24px; justify-content: center; border-radius: 2px; margin-right: 3px; }
.views .cross { margin-right: 14px; }
.views .vsep + .on { margin: 0 5px 0 10px; }
.views button + button:not(.cross) { margin-right: 11px; }
.views .zoom { font-size: 13px; margin: 0 12px 0 12px; }
.slider { width: 153px; height: 1px; background: #333d55; appearance: none; }
.slider::-webkit-slider-thumb { appearance: none; width: 6px; height: 12px; background: #333d55; }

/* overlays floating above the window */
.pointers { position: absolute; left: 0; top: 0; pointer-events: none; filter: drop-shadow(3px 2px 2px #0008); }
.netmeter { position: absolute; right: 30px; bottom: 60px; display: flex; align-items: center; }
.speeds { width: 91px; height: 42px; margin-right: -32px; padding-left: 11px; border-radius: 21px 0 0 21px; background: #333640; color: #989ba3; font-size: 10px; line-height: 21px; box-shadow: 0 0 5px #0005; }
.speeds div { display: flex; align-items: center; gap: 1px; height: 21px; }
.speeds div + div { border-top: 1px solid #2a2c34; }
.speeds b { color: #fff; font-size: 11px; margin-left: 6px; font-weight: 600; }
.gauge { position: relative; width: 60px; height: 60px; border-radius: 50%; background: linear-gradient(#636877, #484c58); border: 1px solid #3c404a; display: flex; align-items: center; justify-content: center; box-shadow: 0 0 5px #0006; }
.gauge svg { position: absolute; inset: -1px; }
.gauge span { color: #fff; font: 300 24px/26px "Open Sans", sans-serif; }
.gauge small { font-size: 10px; }
.ime { position: absolute; right: 1px; bottom: 0; width: 158px; height: 50px; }
.ime-bar { position: absolute; right: 0; bottom: 0; width: 140px; height: 26px; background: #fff; border: 1px solid #b9c8e6; border-radius: 2px; display: flex; align-items: center; justify-content: flex-end; padding-right: 4px; }
.ime .badge { position: absolute; left: 0; top: 0; stroke: none; }
.mark { position: absolute; left: 43px; top: 0; display: flex; flex-direction: column; font-family: "Noto Sans CJK SC", sans-serif; opacity: .85; }
.mark strong { font-size: 21px; line-height: 24px; color: #5a93d4; white-space: nowrap; }
.mark span { font: 17px/20px "Liberation Sans", sans-serif; color: #55b57c; }
```
